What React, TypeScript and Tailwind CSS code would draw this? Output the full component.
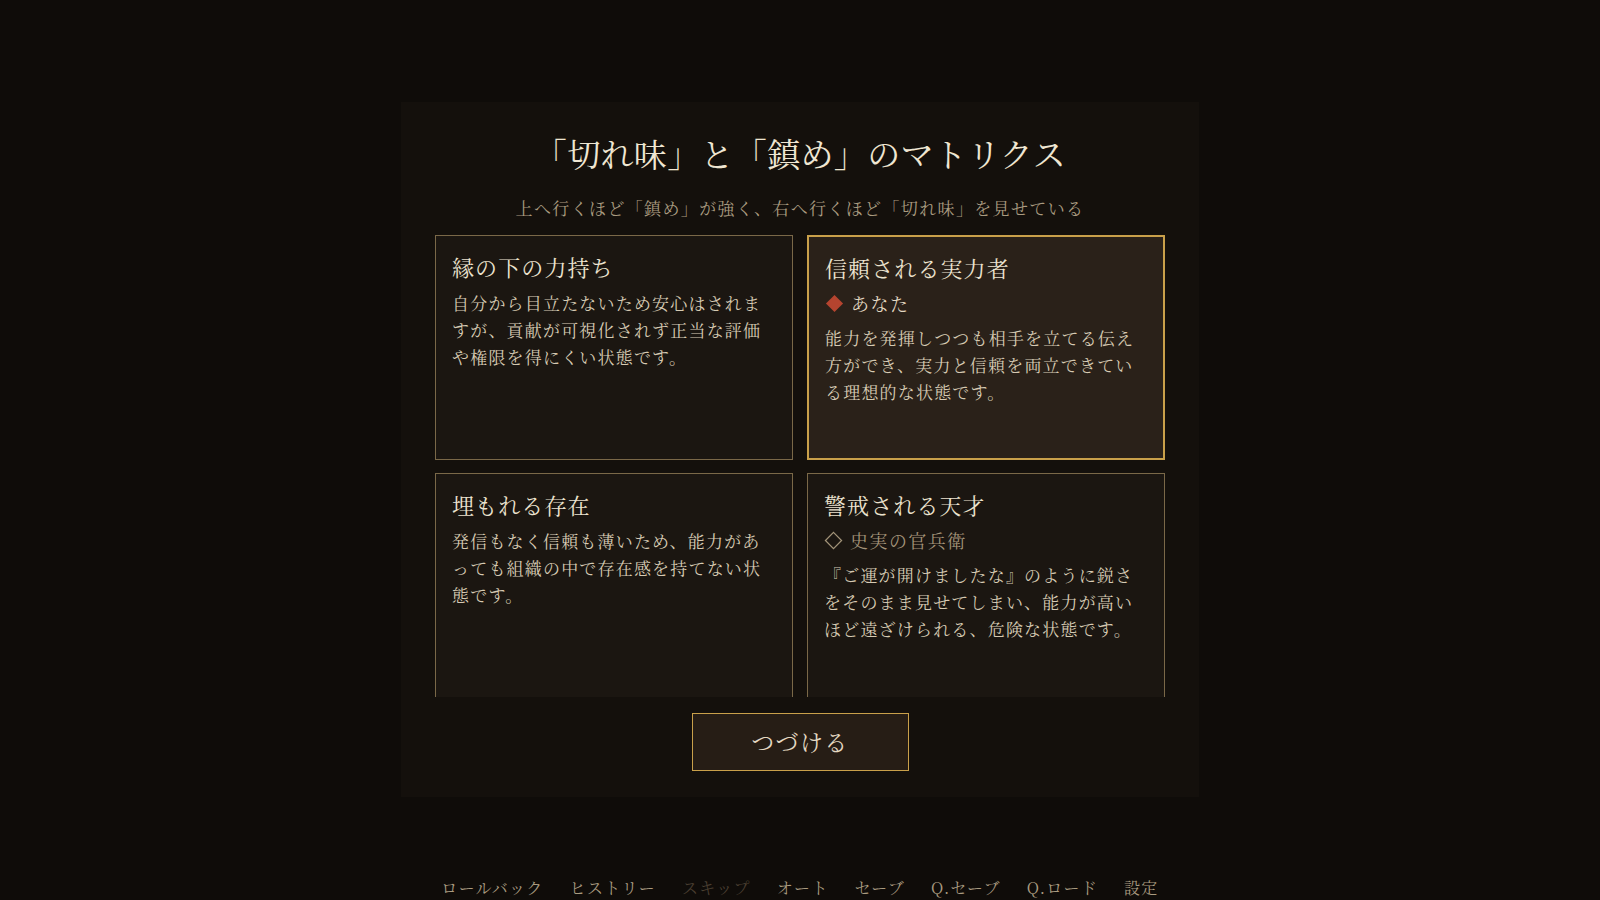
import React from "react";

const serif = "font-['Noto_Serif_CJK_JP','Noto_Serif_JP','Noto_Sans_CJK_JP',serif]";

type Card = {
  title: string;
  tag?: { kind: "you" | "hist"; text: string };
  body: string;
  selected?: boolean;
};

const cards: Card[] = [
  {
    title: "縁の下の力持ち",
    body: "自分から目立たないため安心はされますが、貢献が可視化されず正当な評価や権限を得にくい状態です。",
  },
  {
    title: "信頼される実力者",
    tag: { kind: "you", text: "あなた" },
    body: "能力を発揮しつつも相手を立てる伝え方ができ、実力と信頼を両立できている理想的な状態です。",
    selected: true,
  },
  {
    title: "埋もれる存在",
    body: "発信もなく信頼も薄いため、能力があっても組織の中で存在感を持てない状態です。",
  },
  {
    title: "警戒される天才",
    tag: { kind: "hist", text: "史実の官兵衛" },
    body: "『ご運が開けましたな』のように鋭さをそのまま見せてしまい、能力が高いほど遠ざけられる、危険な状態です。",
  },
];

function CardBox({ c }: { c: Card }) {
  return (
    <div
      className={
        c.selected
          ? "h-[225px] border-2 border-[#c9a04a] bg-[#2a2119] px-4 pt-4"
          : "h-[225px] border border-[#7a6848] bg-[#1b1611] px-4 pt-4"
      }
    >
      <div className="flex flex-col gap-2">
        <div className="text-[22px] leading-[29px] tracking-[0.05em] text-[#ece3cf]">{c.title}</div>
        {c.tag && (
          <div
            className={
              c.tag.kind === "you"
                ? "flex items-center gap-[7px] text-[18px] leading-[26px] tracking-[0.08em] text-[#e3d8c2]"
                : "flex items-center gap-[7px] text-[18px] leading-[26px] tracking-[0.08em] text-[#a39479]"
            }
          >
            {c.tag.kind === "you" ? (
              <svg width="19" height="19" viewBox="0 0 20 20" className="shrink-0">
                <path d="M10 1 L19 10 L10 19 L1 10 Z" fill="#b5442f" />
              </svg>
            ) : (
              <svg width="19" height="19" viewBox="0 0 20 20" className="shrink-0">
                <path d="M10 1.5 L18.5 10 L10 18.5 L1.5 10 Z" fill="none" stroke="#a39479" strokeWidth="1.3" />
              </svg>
            )}
            <span>{c.tag.text}</span>
          </div>
        )}
        <p className="text-[17px] leading-[27px] tracking-[0.07em] text-[#d6cab3]">{c.body}</p>
      </div>
    </div>
  );
}

export default function App() {
  const footer = ["ロールバック", "ヒストリー", "スキップ", "オート", "セーブ", "Q.セーブ", "Q.ロード", "設定"];
  return (
    <div className={`flex h-[900px] w-full flex-col items-center overflow-hidden bg-[#0f0c09] ${serif}`}>
      <div className="mt-[102px] flex w-[798px] flex-col items-center bg-[#14100c] px-[34px] pt-[28px] pb-[26px]">
        <h1 className="text-[33px] leading-[46px] tracking-[0.01em] text-[#efe6d2]">
          「切れ味」と「鎮め」のマトリクス
        </h1>
        <p className="mt-[18px] text-[17px] leading-[28px] tracking-[0.08em] text-[#a99b80]">
          上へ行くほど「鎮め」が強く、右へ行くほど「切れ味」を見せている
        </p>
        <div className="mt-[13px] h-[462px] w-full overflow-hidden">
          <div className="grid grid-cols-2 gap-x-[14px] gap-y-[13px]">
            {cards.map((c) => (
              <CardBox key={c.title} c={c} />
            ))}
          </div>
        </div>
        <button className="mt-[16px] flex h-[58px] w-[217px] items-center justify-center border border-[#c9a04a] bg-[#261d15] text-[23px] tracking-[0.06em] text-[#e3d8c2]">
          つづける
        </button>
      </div>
      <div className="mt-auto flex h-[24px] items-center gap-[26px] text-[16px] tracking-[0.08em]">
        {footer.map((f) => (
          <span key={f} className={f === "スキップ" ? "leading-[24px] text-[#4a3f31]" : "leading-[24px] text-[#a99b80]"}>
            {f}
          </span>
        ))}
      </div>
    </div>
  );
}
